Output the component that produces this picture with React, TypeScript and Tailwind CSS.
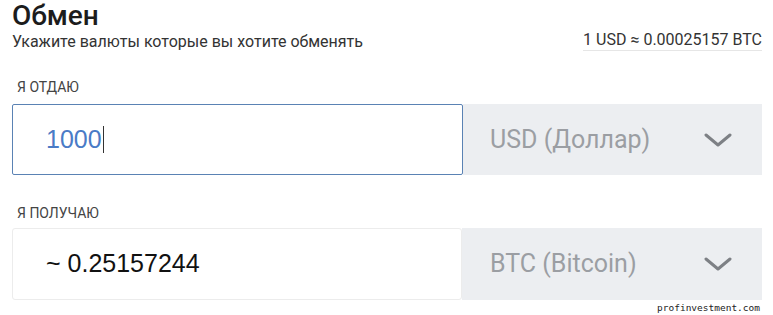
import React from "react";

const Chevron = () => (
  <svg width="28" height="16" viewBox="0 0 28 16" fill="none">
    <path d="M2 3 L14 13 L26 3" stroke="#7d8085" strokeWidth="3" strokeLinecap="round" strokeLinejoin="round" />
  </svg>
);

export default function App() {
  return (
    <div className="w-[773px] h-[315px] bg-white overflow-hidden relative" style={{ fontFamily: "Roboto, 'Liberation Sans', sans-serif" }}>
      <div className="pl-[12px] w-[762px]">
        <div className="h-[32px] text-[28px] leading-[32px] font-medium text-[#1c1c1c]">Обмен</div>
        <div className="flex items-end justify-between h-[19px]">
          <div className="text-[16px] leading-[19px] text-[#333]">Укажите валюты которые вы хотите обменять</div>
          <div className="text-[16px] leading-[19px] text-[#333] border-b border-[#e6e6e6] pb-[1px]">1 USD ≈ 0.00025157 BTC</div>
        </div>
        <div className="mt-[28px] pl-[5px] text-[14px] leading-[16px] text-[#444]">Я ОТДАЮ</div>
        <div className="mt-[9px] flex h-[71px]">
          <div className="w-[451px] border border-[#5a82b4] rounded-[2px] flex items-center pl-[33px]">
            <span className="text-[25px] text-[#4a7bc6]" style={{ fontFamily: "'Liberation Sans', Arial, sans-serif" }}>1000</span>
            <span className="w-[1px] h-[27px] bg-[#333] ml-[1px]"></span>
          </div>
          <div className="flex-1 bg-[#eceef1] flex items-center justify-between pl-[27px] pr-[30px]">
            <span className="text-[25px] text-[#9b9ea3]">USD (Доллар)</span>
            <Chevron />
          </div>
        </div>
        <div className="mt-[30px] pl-[5px] text-[14px] leading-[16px] text-[#444]">Я ПОЛУЧАЮ</div>
        <div className="mt-[7px] flex h-[72px]">
          <div className="w-[450px] border border-[#ececec] rounded-[3px] flex items-center pl-[33px]">
            <span className="text-[25px] text-[#111]" style={{ fontFamily: "'Liberation Sans', Arial, sans-serif" }}>~ 0.25157244</span>
          </div>
          <div className="flex-1 bg-[#eceef1] flex items-center justify-between pl-[28px] pr-[30px]">
            <span className="text-[25px] text-[#9b9ea3]">BTC (Bitcoin)</span>
            <Chevron />
          </div>
        </div>
        <div className="flex justify-end pr-[2px] mt-[2px]">
          <span className="text-[9.5px] leading-[12px] text-[#222]" style={{ fontFamily: "'DejaVu Sans Mono', monospace" }}>profinvestment.com</span>
        </div>
      </div>
    </div>
  );
}
